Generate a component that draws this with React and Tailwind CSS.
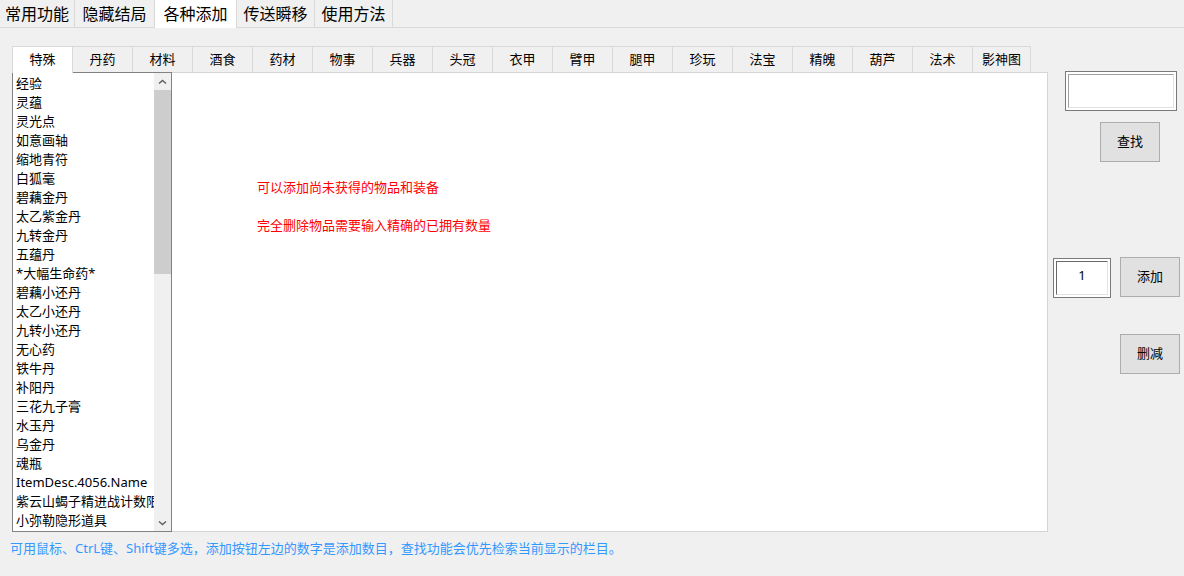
import React from 'react';

const font = { fontFamily: '"Noto Sans", "Noto Sans CJK SC", sans-serif' };

const topTabs = [
  { label: '常用功能', w: 'w-[75px]' },
  { label: '隐藏结局', w: 'w-[80px]' },
  { label: '各种添加', w: 'w-[82px]', active: true },
  { label: '传送瞬移', w: 'w-[78px]' },
  { label: '使用方法', w: 'w-[78px]' },
];

const subTabs = ['丹药', '材料', '酒食', '药材', '物事', '兵器', '头冠', '衣甲', '臂甲', '腿甲', '珍玩', '法宝', '精魄', '葫芦', '法术', '影神图'];

const items = [
  '经验', '灵蕴', '灵光点', '如意画轴', '缩地青符', '白狐毫', '碧藕金丹', '太乙紫金丹',
  '九转金丹', '五蕴丹', '*大幅生命药*', '碧藕小还丹', '太乙小还丹', '九转小还丹', '无心药',
  '铁牛丹', '补阳丹', '三花九子膏', '水玉丹', '乌金丹', '魂瓶', 'ItemDesc.4056.Name',
  '紫云山蝎子精进战计数限', '小弥勒隐形道具',
];

function Chevron({ down }) {
  return (
    <svg width="9" height="6" viewBox="0 0 9 6" className="text-[#606060]">
      <path d={down ? 'M1 1.5 L4.5 4.5 L8 1.5' : 'M1 4.5 L4.5 1.5 L8 4.5'} fill="none" stroke="currentColor" strokeWidth="1.5" />
    </svg>
  );
}

function Button({ children, className }) {
  return (
    <div className={`w-[60px] h-[40px] bg-[#e1e1e1] border border-[#adadad] flex items-center justify-center text-[13px] text-black ${className}`}>
      {children}
    </div>
  );
}

export default function App() {
  return (
    <div className="w-[1184px] h-[576px] bg-[#f0f0f0] overflow-hidden text-black" style={font}>
      {/* top tabs */}
      <div className="flex h-[28px] border-b border-[#d9d9d9]">
        {topTabs.map((t) => (
          <div
            key={t.label}
            className={`${t.w} flex items-center justify-center text-[16px] border-r border-[#d9d9d9] ${t.active ? 'bg-white h-[28px] relative z-10' : 'h-[27px]'}`}
          >
            {t.label}
          </div>
        ))}
      </div>

      <div className="flex">
        {/* left area */}
        <div className="pl-[12px] pt-[17px] flex flex-col">
          <div className="flex items-end h-[27px]">
            <div className="w-[61px] h-[27px] bg-white border-l border-t border-r border-[#d9d9d9] flex items-center justify-center text-[13px] relative z-10 -mb-px">
              特殊
            </div>
            {subTabs.map((t, i) => (
              <div
                key={t}
                className={`${i === subTabs.length - 1 ? 'w-[58px]' : 'w-[60px]'} h-[26px] border-t border-r border-[#d9d9d9] flex items-center justify-center text-[13px]`}
              >
                {t}
              </div>
            ))}
          </div>

          <div className="w-[1036px] h-[460px] bg-white border border-[#d4d4d4] flex">
            {/* list box */}
            <div className="w-[160px] h-[460px] -ml-px -mt-px border border-[#828282] bg-white flex shrink-0">
              <div className="flex-1 pl-[3px] pt-px overflow-hidden">
                {items.map((it) => (
                  <div key={it} className="h-[19px] leading-[19px] text-[13px] whitespace-nowrap overflow-hidden">
                    {it}
                  </div>
                ))}
              </div>
              <div className="w-[17px] bg-[#f0f0f0] flex flex-col">
                <div className="h-[17px] flex items-center justify-center">
                  <Chevron />
                </div>
                <div className="h-[184px] bg-[#cdcdcd]" />
                <div className="flex-1" />
                <div className="h-[17px] flex items-center justify-center">
                  <Chevron down />
                </div>
              </div>
            </div>

            <div className="pl-[85px] pt-[106px] text-[13px] text-[#ff0000] flex flex-col gap-[21px]">
              <div className="leading-[17px]">可以添加尚未获得的物品和装备</div>
              <div className="leading-[17px]">完全删除物品需要输入精确的已拥有数量</div>
            </div>
          </div>

          <div className="-ml-[2px] mt-[8px] text-[13px] leading-[17px] text-[#3399ff]">
            可用鼠标、CtrL键、Shift键多选，添加按钮左边的数字是添加数目，查找功能会优先检索当前显示的栏目。
          </div>
        </div>

        {/* right controls */}
        <div className="flex flex-col pt-[43px]">
          <div className="ml-[17px] w-[112px] h-[40px] border border-[#7a7a7a] p-[2px] bg-white">
            <div className="w-full h-full border-t border-l border-[#a0a0a0] border-r border-b border-r-[#e3e3e3] border-b-[#e3e3e3] bg-white" />
          </div>
          <Button className="ml-[52px] mt-[11px]">查找</Button>
          <div className="flex items-start ml-[5px] mt-[95px]">
            <div className="mt-px w-[58px] h-[40px] border border-[#7a7a7a] p-[2px] bg-white">
              <div className="w-full h-full border-t border-l border-[#696969] border-r border-b border-r-[#e3e3e3] border-b-[#e3e3e3] bg-white flex justify-center text-[13px] leading-[26px]">
                1
              </div>
            </div>
            <Button className="ml-[9px]">添加</Button>
          </div>
          <Button className="ml-[72px] mt-[36px]">删减</Button>
        </div>
      </div>
    </div>
  );
}
